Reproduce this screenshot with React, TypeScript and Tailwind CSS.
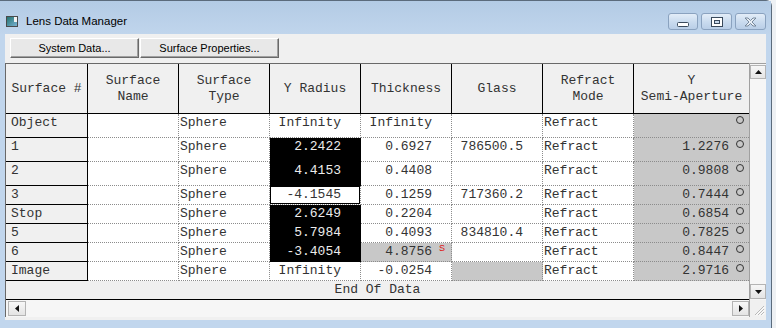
const mono = "font-['Liberation_Mono','Courier_New',monospace] text-[13px]";
const sans = "font-['Liberation_Sans',Arial,sans-serif]";
const cols = 'grid grid-cols-[82px_91px_91px_91px_91px_91px_91px_115px]';
const dotted = 'border-b border-r border-dotted border-[#8c8c8c]';

type Row = {
  surface: string;
  radius: string;
  radiusStyle: 'plain' | 'black' | 'focus';
  thickness: string;
  thicknessGray?: boolean;
  glass: string;
  glassGray?: boolean;
  aperture: string;
  tall?: boolean;
};

const rows: Row[] = [
  { surface: 'Object', radius: 'Infinity', radiusStyle: 'plain', thickness: 'Infinity', glass: '', aperture: '', tall: true },
  { surface: '1', radius: '2.2422', radiusStyle: 'black', thickness: '0.6927', glass: '786500.5', aperture: '1.2276', tall: true },
  { surface: '2', radius: '4.4153', radiusStyle: 'black', thickness: '0.4408', glass: '', aperture: '0.9808', tall: true },
  { surface: '3', radius: '-4.1545', radiusStyle: 'focus', thickness: '0.1259', glass: '717360.2', aperture: '0.7444' },
  { surface: 'Stop', radius: '2.6249', radiusStyle: 'black', thickness: '0.2204', glass: '', aperture: '0.6854' },
  { surface: '5', radius: '5.7984', radiusStyle: 'black', thickness: '0.4093', glass: '834810.4', aperture: '0.7825' },
  { surface: '6', radius: '-3.4054', radiusStyle: 'black', thickness: '4.8756', thicknessGray: true, glass: '', aperture: '0.8447' },
  { surface: 'Image', radius: 'Infinity', radiusStyle: 'plain', thickness: '-0.0254', glass: '', glassGray: true, aperture: '2.9716' },
];

const headers = [
  ['Surface #'],
  ['Surface', 'Name'],
  ['Surface', 'Type'],
  ['Y Radius'],
  ['Thickness'],
  ['Glass'],
  ['Refract', 'Mode'],
  ['Y', 'Semi-Aperture'],
];

function Arrow({ dir }: { dir: 'up' | 'down' | 'left' | 'right' }) {
  const points = {
    up: '0,4 7,4 3.5,0',
    down: '0,0 7,0 3.5,4',
    left: '4,0 4,7 0,3.5',
    right: '0,0 0,7 4,3.5',
  }[dir];
  const vertical = dir === 'up' || dir === 'down';
  return (
    <svg width={vertical ? 7 : 4} height={vertical ? 4 : 7}>
      <polygon points={points} fill="#111" />
    </svg>
  );
}

function ScrollButton({ dir, className }: { dir: 'up' | 'down' | 'left' | 'right'; className: string }) {
  return (
    <div className={`flex items-center justify-center border border-[#b4b4b4] bg-linear-to-b from-[#f7f7f7] to-[#e4e4e4] ${className}`}>
      <Arrow dir={dir} />
    </div>
  );
}

function CaptionButton({ width, children }: { width: string; children: React.ReactNode }) {
  return (
    <div className={`flex h-[17px] ${width} items-center justify-center rounded-[3px] border border-[#8aa2bf] bg-linear-to-b from-[#e3edf8] via-[#cbdcef] to-[#b9cee7]`}>
      {children}
    </div>
  );
}

export default function App() {
  return (
    <div className="h-[328px] w-[776px] overflow-hidden bg-[#eef1f4]">
      <div className="h-[340px] w-[772px] rounded-tr-[6px] border-t border-r border-[#5b6b7c] bg-[#c1d6ed]">
        {/* Title bar */}
        <div className="flex h-[33px] items-center bg-linear-to-b from-[#b3cbe5] to-[#c0d5ec] pt-[8px]">
          <svg width="12" height="11" className="ml-[6px]">
            <defs>
              <linearGradient id="ic" x1="0" y1="0" x2="1" y2="1">
                <stop offset="0" stopColor="#1f6f6a" />
                <stop offset="1" stopColor="#7fb6d8" />
              </linearGradient>
            </defs>
            <rect x="0.5" y="0.5" width="11" height="10" fill="url(#ic)" stroke="#4a4a4a" />
            <rect x="8" y="1" width="3" height="5" fill="#f4f4f4" />
          </svg>
          <span className={`ml-[8px] text-[11.5px] text-black ${sans}`}>Lens Data Manager</span>
          <div className="ml-auto mr-[5px] flex gap-[3px]">
            <CaptionButton width="w-[30px]">
              <svg width="12" height="6" className="mt-[5px]">
                <rect x="0.5" y="1.5" width="11" height="4" rx="1" fill="#fff" stroke="#3a4a5c" />
              </svg>
            </CaptionButton>
            <CaptionButton width="w-[31px]">
              <svg width="12" height="10">
                <rect x="0.5" y="0.5" width="11" height="9" fill="#fff" stroke="#3a4a5c" />
                <rect x="3.5" y="3.5" width="5" height="3" fill="#c9d9ec" stroke="#3a4a5c" />
              </svg>
            </CaptionButton>
            <CaptionButton width="w-[31px]">
              <svg width="13" height="10">
                <path d="M1,1 L4,1 L6.5,3.5 L9,1 L12,1 L8,5 L12,9 L9,9 L6.5,6.5 L4,9 L1,9 L5,5 Z" fill="#e8eef5" stroke="#6d7f93" strokeWidth="0.9" />
              </svg>
            </CaptionButton>
          </div>
        </div>

        {/* Client area */}
        <div className="mx-[5px] flex h-[286px] flex-col bg-[#f0f0f0]">
          <div className={`flex h-[29px] gap-[1px] pl-[5px] pt-[4px] text-[11px] text-black ${sans}`}>
            <button className="h-[20px] w-[129px] border border-t-white border-l-white border-r-[#696969] border-b-[#696969] bg-[#e8e8e8] shadow-[inset_-1px_-1px_0_#a0a0a0]">
              System Data...
            </button>
            <button className="h-[20px] w-[139px] border border-t-white border-l-white border-r-[#696969] border-b-[#696969] bg-[#e8e8e8] shadow-[inset_-1px_-1px_0_#a0a0a0]">
              Surface Properties...
            </button>
          </div>

          {/* Lens data grid */}
          <div className="flex h-[237px]">
            <div className={`w-[744px] border-t border-l border-[#696969] text-[#333] ${mono}`}>
              <div className={`${cols} h-[50px] bg-[#f0f0f0]`}>
                {headers.map((lines, i) => (
                  <div
                    key={lines.join(' ')}
                    className={`flex flex-col items-center justify-center border-b border-black leading-[16px] ${i < 7 ? 'border-r' : ''}`}
                  >
                    {lines.map((line) => (
                      <span key={line}>{line}</span>
                    ))}
                  </div>
                ))}
              </div>

              {rows.map((row) => (
                <div key={row.surface} className={`${cols} leading-[17px] ${row.tall ? 'h-[24px]' : 'h-[19px]'}`}>
                  <div className="border-r border-b border-black bg-[#f0f0f0] pl-[5px]">{row.surface}</div>
                  <div className={`${dotted} bg-white`} />
                  <div className={`${dotted} bg-white pl-[1px]`}>Sphere</div>
                  <div
                    className={`relative pr-[19px] text-right ${
                      row.radiusStyle === 'black'
                        ? 'border-b border-r border-dotted border-black bg-black text-[#ececec]'
                        : `${dotted} bg-white`
                    }`}
                  >
                    {row.radiusStyle === 'focus' && <div className="absolute inset-0 border border-black" />}
                    <span className="relative">{row.radius}</span>
                  </div>
                  <div className={`relative pr-[19px] text-right ${dotted} ${row.thicknessGray ? 'bg-[#c8c8c8]' : 'bg-white'}`}>
                    {row.thickness}
                    {row.thicknessGray && (
                      <span className={`absolute right-[6px] top-[1px] text-[9px] leading-none text-[#e01010] ${sans}`}>S</span>
                    )}
                  </div>
                  <div className={`pr-[19px] text-right ${dotted} ${row.glassGray ? 'bg-[#c8c8c8]' : 'bg-white'}`}>{row.glass}</div>
                  <div className={`${dotted} bg-white pl-[1px]`}>Refract</div>
                  <div className="relative border-b border-dotted border-[#8c8c8c] bg-[#c8c8c8] pr-[20px] text-right">
                    {row.aperture}
                    <div className="absolute right-[5px] top-[2px] h-[8px] w-[8px] rounded-full border border-[#333]" />
                  </div>
                </div>
              ))}

              <div className="h-[19px] border-b border-black bg-[#f0f0f0] text-center leading-[17px]">End Of Data</div>
            </div>

            {/* Vertical scrollbar */}
            <div className="flex w-[17px] flex-col border-t border-l border-[#a0a0a0] bg-[#f6f6f6] pt-[1px]">
              <ScrollButton dir="up" className="h-[14px]" />
              <div className="flex-1" />
              <ScrollButton dir="down" className="mb-[1px] h-[15px]" />
            </div>
          </div>

          {/* Horizontal scrollbar */}
          <div className="flex h-[17px]">
            <div className="flex w-[744px] border-l border-[#696969] bg-[#f6f6f6] pl-[2px] pt-[1px]">
              <ScrollButton dir="left" className="h-[15px] w-[18px]" />
              <div className="flex-1" />
              <ScrollButton dir="right" className="h-[15px] w-[17px]" />
            </div>
            <div className="flex w-[17px] items-end justify-end border-l border-[#a0a0a0] bg-[#f0f0f0] pb-[1px] pr-[1px]">
              <svg width="12" height="12">
                <path d="M11,2 L2,11 M11,5 L5,11 M11,8 L8,11" stroke="#b8b8b8" strokeWidth="1" />
                <path d="M11.5,3 L3,11.5 M11.5,6 L6,11.5 M11.5,9 L9,11.5" stroke="#ffffff" strokeWidth="1" />
              </svg>
            </div>
          </div>
        </div>
      </div>
    </div>
  );
}
